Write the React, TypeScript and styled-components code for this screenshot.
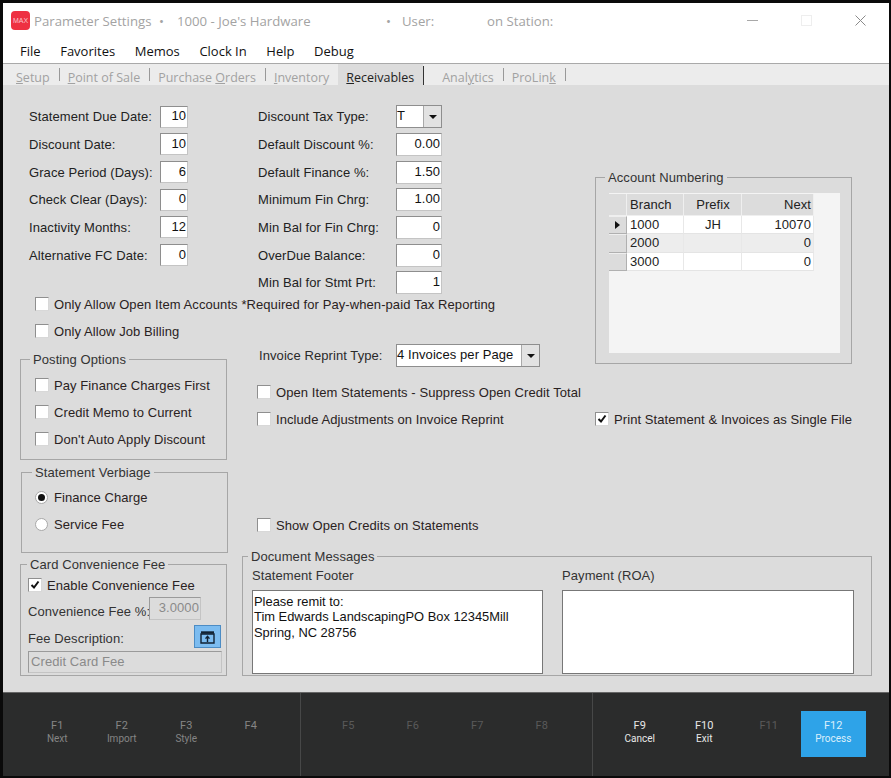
import { createGlobalStyle, styled } from 'styled-components';

const GlobalStyle = createGlobalStyle`
  html, body { margin: 0; padding: 0; background: #000; }
  * { box-sizing: border-box; }
`;

const Frame = styled.div`
  width: 891px;
  height: 778px;
  padding: 3px 2px 2px 3px;
  background: #0a0a0a;
  display: flex;
  flex-direction: column;
  font-family: "Liberation Sans", Arial, sans-serif;
  font-size: 13px;
  letter-spacing: 0.08px;
  color: #222;
  overflow: hidden;
`;

const TitleBar = styled.div`
  height: 37px;
  flex: none;
  background: #fff;
  display: flex;
  align-items: center;
  padding: 0 0 2px 8px;
  font-family: "Open Sans", sans-serif;
  font-size: 13.2px;
  letter-spacing: 0;
  color: #a3a3a3;
`;

const Logo = styled.div`
  width: 19px;
  height: 19px;
  border-radius: 4px;
  background: #ee3042;
  color: #f9c3c8;
  font-family: "Liberation Sans", sans-serif;
  font-size: 7px;
  display: flex;
  align-items: center;
  justify-content: center;
  margin-right: 4px;
`;

const TitleText = styled.span<{ $w: number }>`
  width: ${(p) => p.$w}px;
  flex: none;
  white-space: nowrap;
`;

const WinButtons = styled.div`
  margin-left: auto;
  display: flex;
  align-items: center;
  margin-right: 23px;
  gap: 43px;
`;

const MenuBar = styled.div`
  height: 24px;
  flex: none;
  background: #fff;
  border-bottom: 1px solid #a9a9a9;
  display: flex;
  align-items: center;
  gap: 19.6px;
  padding: 0 0 1px 17px;
  font-family: "Open Sans", sans-serif;
  font-size: 13px;
  letter-spacing: 0;
  color: #111;
`;

const TabStrip = styled.div`
  height: 21px;
  flex: none;
  background: #ececec;
  display: flex;
  align-items: center;
  padding-left: 13px;
  font-family: "Open Sans", sans-serif;
  font-size: 12.5px;
  letter-spacing: 0;
  color: #a2a2a2;
`;

const Tab = styled.div<{ $active?: boolean; $ml?: number }>`
  height: 100%;
  display: flex;
  align-items: center;
  padding: 5px 9px 0 ${(p) => (p.$active ? 8 : 0)}px;
  margin-left: ${(p) => p.$ml ?? 0}px;
  white-space: nowrap;
  background: ${(p) => (p.$active ? '#dcdcdc' : 'transparent')};
  color: ${(p) => (p.$active ? '#222' : 'inherit')};
`;

const TabSep = styled.div<{ $dark?: boolean }>`
  width: 1px;
  height: ${(p) => (p.$dark ? 19 : 13)}px;
  margin-right: ${(p) => (p.$dark ? 0 : 8)}px;
  align-self: flex-start;
  margin-top: ${(p) => (p.$dark ? 2 : 4)}px;
  background: ${(p) => (p.$dark ? '#333' : '#999')};
`;

const Body = styled.div`
  height: 607px;
  flex: none;
  background: #dcdcdc;
  padding: 18px 0 0 17px;
  display: flex;
  flex-direction: column;
`;

const TopArea = styled.div`
  height: 449px;
  flex: none;
  display: flex;
`;

const MainCol = styled.div`
  width: 575px;
  flex: none;
  display: flex;
  flex-direction: column;
`;

const FieldColumns = styled.div`
  display: flex;
  padding-left: 9px;
  height: 194px;
  flex: none;
`;

const FieldColumn = styled.div<{ $w: number }>`
  width: ${(p) => p.$w}px;
  flex: none;
  display: grid;
  grid-auto-rows: 27.67px;
`;

const FieldRow = styled.div<{ $inputX: number }>`
  display: grid;
  grid-template-columns: ${(p) => p.$inputX}px auto;
  justify-content: start;
  align-items: center;
  white-space: nowrap;
`;

const Box = styled.div<{ $w: number; $h?: number; $disabled?: boolean; $left?: boolean; $mt?: number }>`
  width: ${(p) => p.$w}px;
  height: ${(p) => p.$h ?? 23}px;
  margin-top: ${(p) => p.$mt ?? 0}px;
  background: ${(p) => (p.$disabled ? '#dcdcdc' : '#fff')};
  border: 1px solid ${(p) => (p.$disabled ? '#9a9a9a' : '#8e8e8e')};
  border-right-color: #c4c4c4;
  border-bottom-color: #c4c4c4;
  color: ${(p) => (p.$disabled ? '#8a8a8a' : '#111')};
  display: flex;
  align-items: center;
  justify-content: ${(p) => (p.$left ? 'flex-start' : 'flex-end')};
  padding: 0 1px 2px 2px;
  white-space: nowrap;
`;

const Combo = styled.div<{ $w: number }>`
  width: ${(p) => p.$w}px;
  height: 23px;
  background: #fff;
  border: 1px solid #8e8e8e;
  display: flex;
  align-items: stretch;
  color: #111;
`;

const ComboText = styled.div`
  flex: 1;
  padding: 2px 0 0 0;
  white-space: nowrap;
  overflow: hidden;
`;

const ComboArrow = styled.div`
  width: 18px;
  flex: none;
  background: #e2e2e2;
  border-left: 1px solid #a9a9a9;
  display: flex;
  align-items: center;
  justify-content: center;
  &::after {
    content: '';
    border-left: 4px solid transparent;
    border-right: 4px solid transparent;
    border-top: 4px solid #111;
  }
`;

const CheckList = styled.div<{ $ml?: number; $mt?: number }>`
  display: flex;
  flex-direction: column;
  gap: 13px;
  margin-left: ${(p) => p.$ml ?? 0}px;
  margin-top: ${(p) => p.$mt ?? 0}px;
`;

const CheckRow = styled.div`
  height: 14px;
  display: flex;
  align-items: center;
  gap: 5px;
  white-space: nowrap;
  color: #2a2222;
`;

const CheckMark = styled.div`
  width: 14px;
  height: 14px;
  flex: none;
  background: #fff;
  border: 1px solid #8f8f8f;
  border-right-color: #d8d8d8;
  border-bottom-color: #d8d8d8;
  display: flex;
  align-items: center;
  justify-content: center;
`;

const RadioMark = styled.div<{ $on?: boolean }>`
  width: 13px;
  height: 13px;
  flex: none;
  border-radius: 50%;
  background: #fff;
  border: 1px solid #a8a8a8;
  margin-right: 1px;
  display: flex;
  align-items: center;
  justify-content: center;
  &::after {
    content: '';
    width: 7px;
    height: 7px;
    border-radius: 50%;
    background: ${(p) => (p.$on ? '#111' : 'transparent')};
  }
`;

const LowerRow = styled.div`
  display: flex;
  flex: 1;
`;

const LeftStack = styled.div`
  width: 208px;
  flex: none;
  margin-top: 14px;
`;

const MidStack = styled.div`
  margin-left: 29px;
  padding-top: 6px;
`;

const Group = styled.fieldset<{ $w: number; $h: number; $mt?: number; $ml?: number; $pad?: string }>`
  width: ${(p) => p.$w}px;
  height: ${(p) => p.$h}px;
  flex: none;
  margin: ${(p) => p.$mt ?? 0}px 0 0 ${(p) => p.$ml ?? 0}px;
  padding: ${(p) => p.$pad ?? '0'};
  border: 1px solid #a6a6a6;
  min-width: 0;
`;

const GroupTitle = styled.legend<{ $ml: number }>`
  margin-left: ${(p) => p.$ml}px;
  padding: 0 3px;
  height: 15px;
  line-height: 15px;
  color: #333;
  white-space: nowrap;
`;

const InvoiceRow = styled.div`
  display: flex;
  align-items: center;
  padding-left: 2px;
  color: #2a2a2a;
  white-space: nowrap;
`;

const InvoiceLabel = styled.div`
  width: 137px;
  flex: none;
`;

const RightCol = styled.div`
  width: 270px;
  padding-top: 67px;
`;

const GridBox = styled.div`
  width: 231px;
  height: 160px;
  background: #f4f4f4;
  padding-top: 1px;
`;

const Grid = styled.div`
  width: 205px;
  display: grid;
  grid-template-columns: 18px 57px 58px 72px;
  grid-template-rows: 22px repeat(3, 18.3px);
`;

const Cell = styled.div<{ $head?: boolean; $alt?: boolean; $align?: string }>`
  display: flex;
  align-items: center;
  justify-content: ${(p) => p.$align ?? 'flex-start'};
  padding: 0 2px 0 3px;
  background: ${(p) => (p.$head ? '#dcdcdc' : p.$alt ? '#ededed' : '#fff')};
  border-right: 1px solid ${(p) => (p.$head ? '#efefef' : '#e8e8e8')};
  border-bottom: 1px solid ${(p) => (p.$head ? '#efefef' : '#e4e4e4')};
  color: #222;
`;

const RowHead = styled.div<{ $current?: boolean }>`
  background: #dcdcdc;
  border-top: 1px solid #efefef;
  border-right: 1px solid #b0b0b0;
  border-bottom: 1px solid #b0b0b0;
  display: flex;
  align-items: center;
  justify-content: center;
  &::after {
    content: '';
    border-top: 4px solid transparent;
    border-bottom: 4px solid transparent;
    border-left: 5px solid ${(p) => (p.$current ? '#111' : 'transparent')};
  }
`;

const BottomRow = styled.div`
  display: flex;
  align-items: flex-start;
`;

const FeeRow = styled.div<{ $mt: number }>`
  display: flex;
  align-items: center;
  margin-top: ${(p) => p.$mt}px;
  white-space: nowrap;
  color: #333;
`;

const FeeLabel = styled.div<{ $w: number; $drop: number }>`
  width: ${(p) => p.$w}px;
  flex: none;
  padding-top: ${(p) => p.$drop}px;
`;

const PickButton = styled.div`
  width: 27px;
  height: 23px;
  background: #7cbcf0;
  border: 1px solid #4c8cc4;
  display: flex;
  align-items: center;
  justify-content: center;
`;

const MessageColumns = styled.div`
  display: grid;
  grid-template-columns: 291px 292px;
  column-gap: 19px;
  row-gap: 7px;
  margin-top: 5px;
`;

const MessageLabel = styled.div`
  height: 14px;
  line-height: 14px;
  color: #333;
`;

const MessageBox = styled.div`
  height: 84px;
  background: #fff;
  border: 1px solid #777;
  padding: 3px 1px;
  font-size: 12.9px;
  letter-spacing: 0;
  line-height: 15.4px;
  color: #111;
`;

const Footer = styled.div`
  height: 84px;
  flex: none;
  background: #2b2c2c;
  border-top: 1px solid #666;
  display: flex;
  font-family: Roboto, sans-serif;
  letter-spacing: 0;
`;

const KeyGroup = styled.div<{ $w?: number; $pl: number; $line?: boolean }>`
  width: ${(p) => (p.$w ? `${p.$w}px` : 'auto')};
  flex: ${(p) => (p.$w ? 'none' : '1')};
  padding: 18px 0 0 ${(p) => p.$pl}px;
  display: flex;
  align-items: flex-start;
  border-right: ${(p) => (p.$line ? '1px solid #474848' : '0')};
`;

const Key = styled.div<{ $state: 'off' | 'dim' | 'on' | 'primary' }>`
  width: 64.5px;
  height: 46px;
  flex: none;
  padding-top: 9px;
  text-align: center;
  font-size: 11px;
  line-height: 12.5px;
  background: ${(p) => (p.$state === 'primary' ? '#2ea3e8' : 'transparent')};
  color: ${(p) =>
    p.$state === 'primary' ? '#dceffb' : p.$state === 'on' ? '#e8e8e8' : p.$state === 'dim' ? '#858585' : '#5a5a5a'};
`;

const KeyName = styled.div`
  font-size: 10px;
`;

const fieldsLeft = [
  ['Statement Due Date:', '10'],
  ['Discount Date:', '10'],
  ['Grace Period (Days):', '6'],
  ['Check Clear (Days):', '0'],
  ['Inactivity Months:', '12'],
  ['Alternative FC Date:', '0'],
];

const fieldsMid = [
  ['Default Discount %:', '0.00'],
  ['Default Finance %:', '1.50'],
  ['Minimum Fin Chrg:', '1.00'],
  ['Min Bal for Fin Chrg:', '0'],
  ['OverDue Balance:', '0'],
  ['Min Bal for Stmt Prt:', '1'],
];

const accounts = [
  { branch: '1000', prefix: 'JH', next: '10070' },
  { branch: '2000', prefix: '', next: '0' },
  { branch: '3000', prefix: '', next: '0' },
];

type KeyState = 'off' | 'dim' | 'on' | 'primary';

const keysA: [string, string, KeyState][] = [
  ['F1', 'Next', 'dim'],
  ['F2', 'Import', 'dim'],
  ['F3', 'Style', 'dim'],
  ['F4', '', 'dim'],
];
const keysB: [string, string, KeyState][] = [
  ['F5', '', 'off'],
  ['F6', '', 'off'],
  ['F7', '', 'off'],
  ['F8', '', 'off'],
];
const keysC: [string, string, KeyState][] = [
  ['F9', 'Cancel', 'on'],
  ['F10', 'Exit', 'on'],
  ['F11', '', 'off'],
  ['F12', 'Process', 'primary'],
];

const Check = ({ label, on }: { label: string; on?: boolean }) => (
  <CheckRow>
    <CheckMark>
      {on && (
        <svg width="10" height="10" viewBox="0 0 10 10">
          <path d="M1.5 5 L4 7.5 L8.5 1.5" fill="none" stroke="#111" strokeWidth="2" />
        </svg>
      )}
    </CheckMark>
    {label}
  </CheckRow>
);

const Radio = ({ label, on }: { label: string; on?: boolean }) => (
  <CheckRow>
    <RadioMark $on={on} />
    {label}
  </CheckRow>
);

const Keys = ({ items }: { items: [string, string, KeyState][] }) => (
  <>
    {items.map(([f, name, state]) => (
      <Key key={f} $state={state}>
        {f}
        {name && <KeyName>{name}</KeyName>}
      </Key>
    ))}
  </>
);

export default function App() {
  return (
    <>
      <GlobalStyle />
      <Frame>
        <TitleBar>
          <Logo>MAX</Logo>
          <TitleText $w={125}>Parameter Settings</TitleText>
          <TitleText $w={18}>•</TitleText>
          <TitleText $w={209}>1000 - Joe's Hardware</TitleText>
          <TitleText $w={16}>•</TitleText>
          <TitleText $w={85}>User:</TitleText>
          <TitleText $w={70}>on Station:</TitleText>
          <WinButtons>
            <svg width="11" height="11" viewBox="0 0 11 11">
              <path d="M0 5.5 H11" stroke="#a8a8a8" strokeWidth="1" />
            </svg>
            <svg width="11" height="11" viewBox="0 0 11 11">
              <rect x="0.5" y="0.5" width="10" height="10" fill="none" stroke="#eeeeee" />
            </svg>
            <svg width="11" height="11" viewBox="0 0 11 11">
              <path d="M0.5 0.5 L10.5 10.5 M10.5 0.5 L0.5 10.5" stroke="#8a8a8a" strokeWidth="1" />
            </svg>
          </WinButtons>
        </TitleBar>
        <MenuBar>
          <span>File</span>
          <span>Favorites</span>
          <span>Memos</span>
          <span>Clock In</span>
          <span>Help</span>
          <span>Debug</span>
        </MenuBar>
        <TabStrip>
          <Tab><span><u>S</u>etup</span></Tab>
          <TabSep />
          <Tab><span><u>P</u>oint of Sale</span></Tab>
          <TabSep />
          <Tab><span>Purchase <u>O</u>rders</span></Tab>
          <TabSep />
          <Tab><span><u>I</u>nventory</span></Tab>
          <Tab $active><span><u>R</u>eceivables</span></Tab>
          <TabSep $dark />
          <Tab $ml={18}><span>Anal<u>y</u>tics</span></Tab>
          <TabSep />
          <Tab><span>ProLin<u>k</u></span></Tab>
          <TabSep />
        </TabStrip>
        <Body>
          <TopArea>
            <MainCol>
              <FieldColumns>
                <FieldColumn $w={229}>
                  {fieldsLeft.map(([label, value]) => (
                    <FieldRow key={label} $inputX={131}>
                      {label}
                      <Box $w={28} $h={22}>{value}</Box>
                    </FieldRow>
                  ))}
                </FieldColumn>
                <FieldColumn $w={190}>
                  <FieldRow $inputX={138}>
                    Discount Tax Type:
                    <Combo $w={46}>
                      <ComboText>T</ComboText>
                      <ComboArrow />
                    </Combo>
                  </FieldRow>
                  {fieldsMid.map(([label, value]) => (
                    <FieldRow key={label} $inputX={138}>
                      {label}
                      <Box $w={46}>{value}</Box>
                    </FieldRow>
                  ))}
                </FieldColumn>
              </FieldColumns>
              <CheckList $ml={15}>
                <Check label="Only Allow Open Item Accounts *Required for Pay-when-paid Tax Reporting" />
                <Check label="Only Allow Job Billing" />
              </CheckList>
              <LowerRow>
                <LeftStack>
                  <Group $w={207} $h={108} $pad="11px 0 0 14px">
                    <GroupTitle $ml={-5}>Posting Options</GroupTitle>
                    <CheckList>
                      <Check label="Pay Finance Charges First" />
                      <Check label="Credit Memo to Current" />
                      <Check label="Don't Auto Apply Discount" />
                    </CheckList>
                  </Group>
                  <Group $w={207} $h={88} $mt={5} $ml={1} $pad="10px 0 0 13px">
                    <GroupTitle $ml={-3}>Statement Verbiage</GroupTitle>
                    <CheckList>
                      <Radio label="Finance Charge" on />
                      <Radio label="Service Fee" />
                    </CheckList>
                  </Group>
                </LeftStack>
                <MidStack>
                  <InvoiceRow>
                    <InvoiceLabel>Invoice Reprint Type:</InvoiceLabel>
                    <Combo $w={144}>
                      <ComboText>4 Invoices per Page</ComboText>
                      <ComboArrow />
                    </Combo>
                  </InvoiceRow>
                  <CheckList $mt={18}>
                    <Check label="Open Item Statements - Suppress Open Credit Total" />
                    <Check label="Include Adjustments on Invoice Reprint" />
                  </CheckList>
                  <CheckList $mt={92}>
                    <Check label="Show Open Credits on Statements" />
                  </CheckList>
                </MidStack>
              </LowerRow>
            </MainCol>
            <RightCol>
              <Group $w={257} $h={194} $pad="8px 0 0 13px">
                <GroupTitle $ml={-4}>Account Numbering</GroupTitle>
                <GridBox>
                  <Grid>
                    <Cell $head />
                    <Cell $head>Branch</Cell>
                    <Cell $head $align="center">Prefix</Cell>
                    <Cell $head $align="flex-end">Next</Cell>
                    {accounts.flatMap((row, i) => [
                      <RowHead key={`h${row.branch}`} $current={i === 0} />,
                      <Cell key={`b${row.branch}`} $alt={i === 1}>{row.branch}</Cell>,
                      <Cell key={`p${row.branch}`} $alt={i === 1} $align="center">{row.prefix}</Cell>,
                      <Cell key={`n${row.branch}`} $alt={i === 1} $align="flex-end">{row.next}</Cell>,
                    ])}
                  </Grid>
                </GridBox>
              </Group>
              <CheckList $mt={48}>
                <Check label="Print Statement & Invoices as Single File" on />
              </CheckList>
            </RightCol>
          </TopArea>
          <BottomRow>
            <Group $w={207} $h={119} $mt={5} $pad="6px 5px 0 7px">
              <GroupTitle $ml={-1}>Card Convenience Fee</GroupTitle>
              <Check label="Enable Convenience Fee" on />
              <FeeRow $mt={5}>
                <FeeLabel $w={121} $drop={6}>Convenience Fee %:</FeeLabel>
                <Box $w={52} $disabled>3.0000</Box>
              </FeeRow>
              <FeeRow $mt={5}>
                <FeeLabel $w={166} $drop={3}>Fee Description:</FeeLabel>
                <PickButton>
                  <svg width="15" height="14" viewBox="0 0 15 14">
                    <path d="M1 4 H14 V13 H1 Z" fill="none" stroke="#123" strokeWidth="1.4" />
                    <path d="M1 2.5 H14" stroke="#123" strokeWidth="2.4" />
                    <path d="M7.5 12 V7 M5.5 8.6 L7.5 6.4 L9.5 8.6" fill="none" stroke="#123" strokeWidth="1.4" />
                  </svg>
                </PickButton>
              </FeeRow>
              <Box $w={194} $h={22} $disabled $left $mt={3}>Credit Card Fee</Box>
            </Group>
            <Group $w={630} $h={127} $ml={15} $mt={-3} $pad="0 0 0 9px">
              <GroupTitle $ml={-4}>Document Messages</GroupTitle>
              <MessageColumns>
                <MessageLabel>Statement Footer</MessageLabel>
                <MessageLabel>Payment (ROA)</MessageLabel>
                <MessageBox>
                  Please remit to:
                  <br />
                  Tim Edwards LandscapingPO Box 12345Mill
                  <br />
                  Spring, NC 28756
                </MessageBox>
                <MessageBox />
              </MessageColumns>
            </Group>
          </BottomRow>
        </Body>
        <Footer>
          <KeyGroup $w={298} $pl={22} $line><Keys items={keysA} /></KeyGroup>
          <KeyGroup $w={292} $pl={15} $line><Keys items={keysB} /></KeyGroup>
          <KeyGroup $pl={14.5}><Keys items={keysC} /></KeyGroup>
        </Footer>
      </Frame>
    </>
  );
}
